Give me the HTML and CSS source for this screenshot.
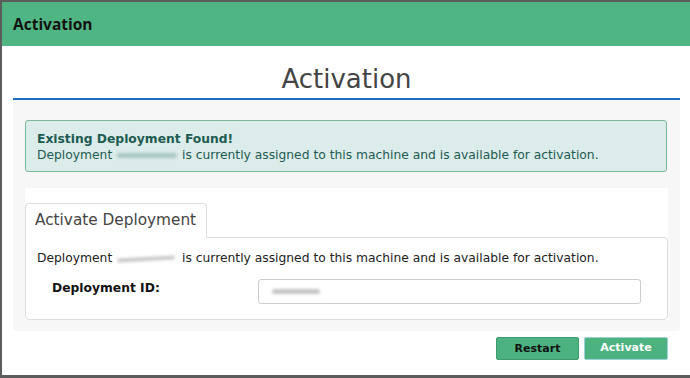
FILE: index.html
```html
<!DOCTYPE html>
<html>
<head>
<meta charset="utf-8">
<link rel="stylesheet" href="styles.css">
</head>
<body>
<div class="modal">
  <div class="modal-header">Activation</div>
  <div class="modal-body">
    <h1 class="page-title">Activation</h1>
    <div class="panel">
      <div class="alert">
        <div class="alert-title">Existing Deployment Found!</div>
        <div>Deployment <span class="blur blur-teal"></span> is currently assigned to this machine and is available for activation.</div>
      </div>
      <div class="tabs">
        <div class="tab-nav"><div class="tab active">Activate Deployment</div></div>
        <div class="tab-content">
          <p class="info">Deployment <span class="blur blur-grey"></span> is currently assigned to this machine and is available for activation.</p>
          <div class="form-row">
            <label class="form-label">Deployment ID:</label>
            <div class="input"><span class="blur blur-input"></span></div>
          </div>
        </div>
      </div>
    </div>
    <div class="actions">
      <button class="btn btn-restart">Restart</button>
      <button class="btn btn-activate">Activate</button>
    </div>
  </div>
</div>
</body>
</html>
```
FILE: styles.css
```css
* { box-sizing: border-box; }
html, body { margin: 0; padding: 0; }
body {
  background: #5c5c5c;
  width: 690px;
  height: 378px;
  overflow: hidden;
  font-family: "DejaVu Sans", sans-serif;
  font-size: 12.3px;
  color: #222;
}
.modal {
  margin: 2px 0 0 2px;
  width: 688px;
  height: 373px;
  background: #fff;
  display: flex;
  flex-direction: column;
}
.modal-header {
  height: 44px;
  background: #4fb683;
  display: flex;
  align-items: center;
  padding-left: 11px;
  font-family: "Open Sans", sans-serif;
  font-weight: 700;
  font-size: 15.5px;
  color: #111;
}
.modal-body {
  padding: 0 10px 0 11px;
}
.page-title {
  margin: 0;
  height: 54px;
  padding-top: 15px;
  text-align: center;
  font-family: "DejaVu Sans", sans-serif;
  font-weight: 400;
  font-size: 26px;
  line-height: 36px;
  color: #444;
  border-bottom: 2px solid #1f6fbf;
}
.panel {
  background: #f7f7f7;
  padding: 20px 12px 11px 12px;
  border-radius: 0 0 4px 4px;
}
.alert {
  background: #dcecea;
  border: 1px solid #7bb89b;
  border-radius: 3px;
  padding: 10px 11px 8px;
  color: #1d5b52;
  line-height: 16px;
  margin-right: 1px;
}
.alert-title { font-weight: 700; }
.blur {
  display: inline-block;
  vertical-align: middle;
  border-radius: 3px;
  filter: blur(1.4px);
}
.blur-teal {
  width: 60px;
  height: 5px;
  background: #a9c7c4;
  margin: 0 1px;
}
.blur-grey {
  width: 58px;
  height: 4px;
  background: #c8c8c8;
  transform: rotate(-3deg);
  margin: 0 3px 0 1px;
}
.blur-input {
  width: 48px;
  height: 5px;
  background: #c4c4c4;
  margin-left: 13px;
}
.tabs {
  margin-top: 16px;
  background: #fff;
  padding-top: 15px;
}
.tab-nav {
  display: flex;
  height: 35px;
}
.tab {
  width: 182px;
  border: 1px solid #ddd;
  border-bottom: none;
  border-radius: 4px 4px 0 0;
  padding-left: 9px;
  font-size: 15.3px;
  line-height: 33px;
  color: #444;
  background: #fff;
  position: relative;
  z-index: 1;
  height: 35px;
}
.tab-content {
  margin-top: -1px;
  border: 1px solid #ddd;
  border-radius: 0 4px 4px 4px;
  padding: 12px 11px 15px;
}
.info {
  margin: 0;
  line-height: 16px;
}
.form-row {
  margin-top: 13px;
  display: flex;
  align-items: flex-start;
  padding: 0 15px;
}
.form-label {
  width: 206px;
  font-weight: 700;
  color: #111;
  line-height: 16px;
  padding-top: 1px;
}
.input {
  flex: 1;
  height: 25px;
  border: 1px solid #ccc;
  border-radius: 3px;
  background: #fff;
  display: flex;
  align-items: center;
}
.actions {
  display: flex;
  justify-content: flex-end;
  gap: 5px;
  padding: 6px 12px 0 0;
}
.btn {
  height: 23px;
  border-radius: 2px;
  background: #4cb380;
  font-family: "DejaVu Sans", sans-serif;
  font-weight: 700;
  font-size: 11px;
  padding: 0;
}
.btn-restart {
  width: 83px;
  color: #111;
  border: 1px solid #3f9a70;
}
.btn-activate {
  width: 84px;
  color: #fff;
  border: 1px solid #9dd0d8;
  line-height: 19px;
  padding-bottom: 2px;
}
```
